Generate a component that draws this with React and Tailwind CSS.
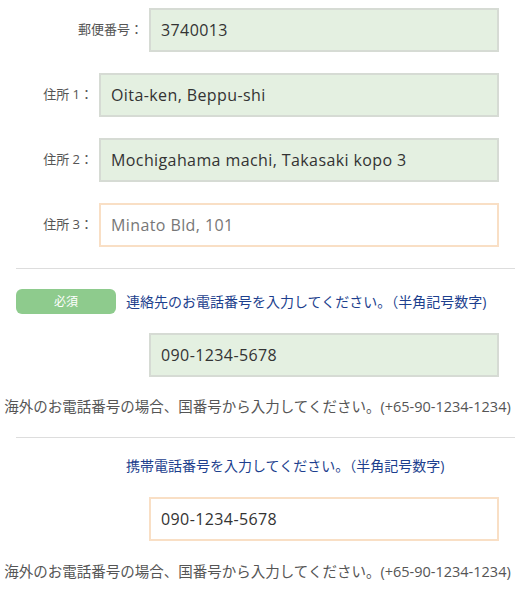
import React from 'react';

const font = "font-['Open_Sans','Noto_Sans_CJK_JP',sans-serif]";

const Field = ({ label, value, placeholder, wide, filled = true }) => (
  <div className="flex items-center justify-end gap-[6px] pr-4">
    {label && <span className="text-[13px] text-[#555]">{label}</span>}
    <input
      readOnly
      defaultValue={value}
      placeholder={placeholder}
      className={`h-[44px] border-2 px-2.5 text-[16px] tracking-[0.4px] text-[#333] outline-none placeholder:text-[#777] ${
        wide ? 'w-[400px]' : 'w-[350px]'
      } ${filled ? 'bg-[#e4f0e1] border-[#d6dbd4]' : 'bg-white border-[#f9dfc5]'}`}
    />
  </div>
);

const Note = ({ className = '' }) => (
  <p className={`text-center text-[14.5px] leading-5 text-[#555] ${className}`}>
    海外のお電話番号の場合、国番号から入力してください。(+65-90-1234-1234)
  </p>
);

export default function App() {
  return (
    <div className={`w-[515px] h-[593px] overflow-hidden bg-white pt-2 ${font}`}>
      {/* 住所 */}
      <div className="flex flex-col gap-[21px]">
        <Field label="郵便番号：" value="3740013" />
        <Field label="住所 1：" value="Oita-ken, Beppu-shi" wide />
        <Field label="住所 2：" value="Mochigahama machi, Takasaki kopo 3" wide />
        <Field label="住所 3：" placeholder="Minato Bld, 101" wide filled={false} />
      </div>

      <hr className="ml-4 mt-[21px] border-t border-[#ddd]" />

      {/* 連絡先 */}
      <div className="mt-5 flex items-center gap-[10px] pl-4">
        <span className="flex h-[25px] w-[100px] items-center justify-center rounded-md bg-[#8ecb8d] text-[12px] text-white">
          必須
        </span>
        <span className="text-[14px] text-[#1d3f8e]">連絡先のお電話番号を入力してください。（半角記号数字)</span>
      </div>
      <div className="mt-[19px]">
        <Field value="090-1234-5678" />
      </div>
      <Note className="mt-5" />

      <hr className="ml-4 mt-5 border-t border-[#ddd]" />

      <p className="mt-[18px] pl-[126px] text-[14px] leading-5 text-[#1d3f8e]">
        携帯電話番号を入力してください。（半角記号数字)
      </p>
      <div className="mt-[21px]">
        <Field value="090-1234-5678" filled={false} />
      </div>
      <Note className="mt-[21px]" />
    </div>
  );
}
